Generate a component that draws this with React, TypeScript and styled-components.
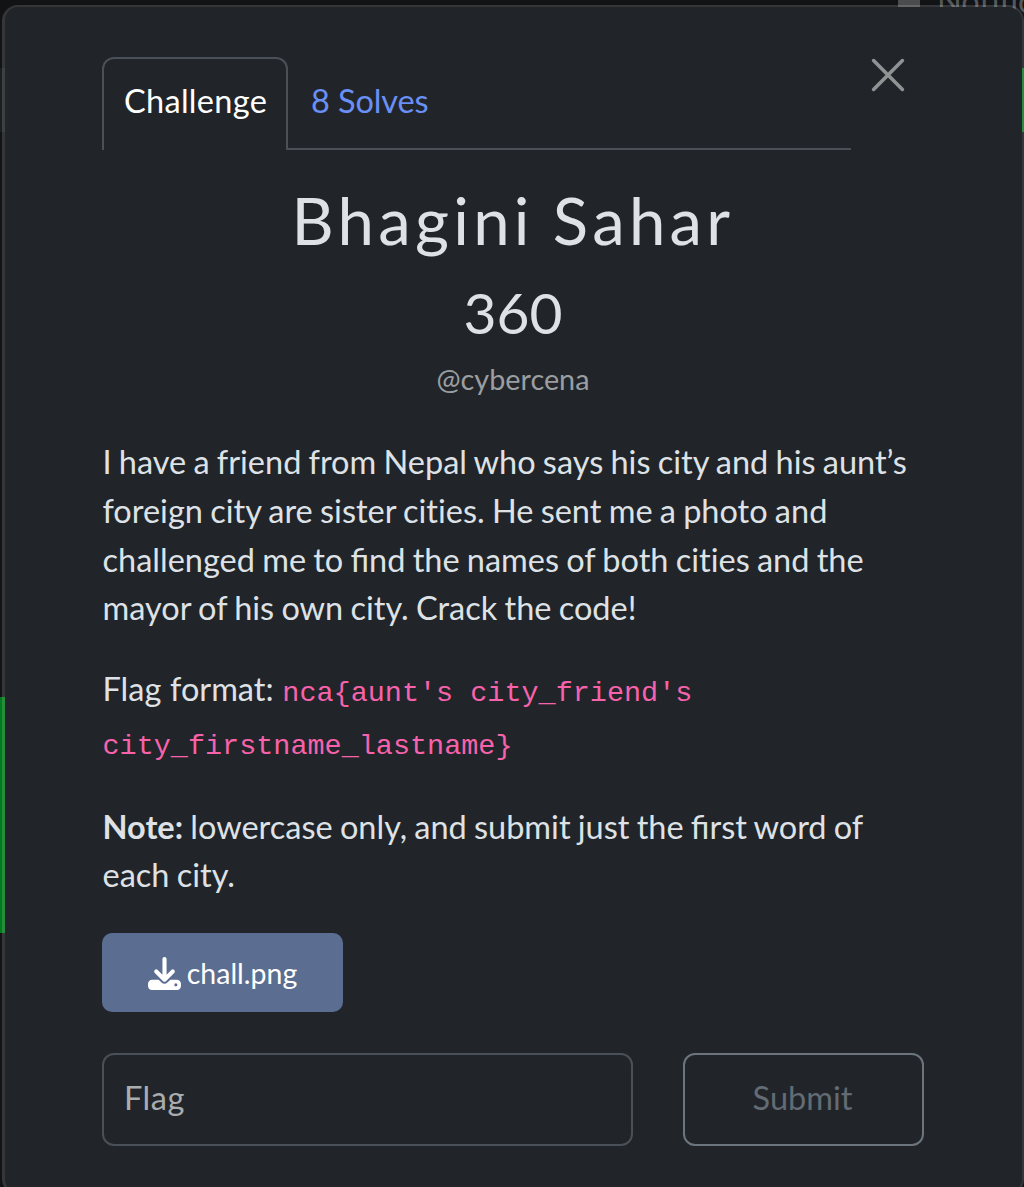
import React from "react";
import styled, { createGlobalStyle } from "styled-components";
import { FaDownload } from "react-icons/fa6";

const GlobalStyle = createGlobalStyle`
  *, *::before, *::after { box-sizing: border-box; }
  body {
    margin: 0;
    background: #111315;
    color: #dee2e6;
    font-family: Lato, "Noto Sans", sans-serif;
    font-size: 32.5px;
    line-height: 1.5;
  }
`;

const Page = styled.div`
  position: relative;
  width: 1024px;
  height: 1187px;
  overflow: hidden;
  padding: 5px 0 0 2px;
`;

const Tile = styled.div<{ $x: number; $y: number; $w: number; $h: number; $color: string }>`
  position: absolute;
  left: ${(p) => p.$x}px;
  top: ${(p) => p.$y}px;
  width: ${(p) => p.$w}px;
  height: ${(p) => p.$h}px;
  background: ${(p) => p.$color};
`;

const NavLabel = styled.div`
  position: absolute;
  left: 937px;
  top: -19px;
  color: #55585b;
  font-size: 32.5px;
  line-height: 40px;
  white-space: nowrap;
`;

const Modal = styled.section`
  position: relative;
  display: flex;
  flex-direction: column;
  width: 1022px;
  height: 1190px;
  padding: 50px 98px 0 97px;
  background: #212529;
  background-clip: padding-box;
  border: 2px solid rgba(255, 255, 255, 0.15);
  border-left-width: 3px;
  border-radius: 16px;
`;

const Header = styled.header`
  display: flex;
  justify-content: space-between;
  height: 93px;
`;

const Tabs = styled.nav`
  display: flex;
  width: 749px;
  height: 93px;
  border-bottom: 2px solid #495057;
`;

const Tab = styled.button<{ $active?: boolean }>`
  height: 93px;
  padding: 0 ${(p) => (p.$active ? 19 : 21)}px 6px;
  font: inherit;
  letter-spacing: ${(p) => (p.$active ? 0.3 : -0.1)}px;
  text-indent: ${(p) => (p.$active ? 1 : 0)}px;
  white-space: nowrap;
  background: ${(p) => (p.$active ? "#212529" : "transparent")};
  color: ${(p) => (p.$active ? "#fff" : "#6a8ff5")};
  border: 2px solid ${(p) => (p.$active ? "#495057" : "transparent")};
  border-bottom: 0;
  border-radius: 12px 12px 0 0;
  width: ${(p) => (p.$active ? "186px" : "auto")};
`;

const Close = styled.button`
  width: 34px;
  height: 34px;
  margin: 1px 19px 0 0;
  padding: 0;
  border: 0;
  background: none;
  color: #909294;
  svg { display: block; }
`;

const Title = styled.h2`
  margin: 31px 0 0;
  font-size: 65.3px;
  font-weight: 400;
  line-height: 78px;
  letter-spacing: 4.3px;
  word-spacing: -2px;
  text-align: center;
`;

const Points = styled.h3`
  margin: 19px 0 0;
  font-size: 56.9px;
  font-weight: 400;
  line-height: 68px;
  text-align: center;
`;

const Author = styled.small`
  display: block;
  margin-top: 12px;
  font-size: 28.8px;
  line-height: 42px;
  color: #9a9ea1;
  text-align: center;
`;

const Description = styled.div`
  margin: 38px 0 1px;
  padding-left: 0.5px;
  word-spacing: -1.1px;
`;

const Text = styled.p`
  margin: 0 0 32px;
  line-height: 48.75px;
`;

const FormatText = styled(Text)`
  word-spacing: 0.4px;
`;

const Plain = styled.span`
  font-variant-ligatures: none;
`;

const Code = styled.code`
  font-family: "Liberation Mono", monospace;
  font-size: 28.48px;
  line-height: 46.75px;
  word-spacing: 0;
  color: #f762ab;
`;

const Download = styled.a`
  display: flex;
  align-items: center;
  justify-content: center;
  gap: 6px;
  width: 241px;
  height: 79px;
  padding-top: 1px;
  flex-shrink: 0;
  border-radius: 10px;
  background: #5b6e91;
  color: #fff;
  font-size: 28.5px;
  line-height: 42px;
`;

const Form = styled.form`
  display: flex;
  gap: 50px;
  margin-top: 41px;
`;

const FlagInput = styled.input`
  width: 531px;
  height: 93px;
  padding: 0 20px 4px;
  background: #212529;
  border: 2px solid #495057;
  border-radius: 12px;
  color: #dee2e6;
  font: inherit;
  letter-spacing: 0.5px;
  &::placeholder { color: #a9adb0; opacity: 1; }
`;

const Submit = styled.button`
  width: 241px;
  height: 93px;
  padding: 0 2px 3px 0;
  background: transparent;
  border: 2px solid #6c757d;
  border-radius: 12px;
  color: #636b74;
  font: inherit;
`;

export default function App() {
  return (
    <Page>
      <GlobalStyle />
      <Tile $x={0} $y={68} $w={5} $h={64} $color="#1b1f22" />
      <Tile $x={0} $y={697} $w={5} $h={236} $color="#007a1e" />
      <Tile $x={1020} $y={68} $w={4} $h={64} $color="#007a1e" />
      <Tile $x={898} $y={0} $w={22} $h={7} $color="#4a4c4e" />
      <NavLabel>Notifications</NavLabel>
      <Modal>
        <Header>
          <Tabs>
            <Tab $active>Challenge</Tab>
            <Tab>8 Solves</Tab>
          </Tabs>
          <Close aria-label="Close">
            <svg width="34" height="34" viewBox="0 0 34 34" fill="none" stroke="currentColor" strokeWidth="3.6" strokeLinecap="round">
              <path d="M2.600 2.600 31.400 31.400M31.400 2.600 2.600 31.400" />
            </svg>
          </Close>
        </Header>
        <Title>Bhagini Sahar</Title>
        <Points>360</Points>
        <Author>@cybercena</Author>
        <Description>
          <Text>
            I have a friend from Nepal who says his city and his aunt’s foreign city are sister <Plain>cities</Plain>. He
            sent me a photo and challenged me to find the names of both <Plain>cities</Plain> and the mayor of his own
            city. Crack the code!
          </Text>
          <FormatText>
            Flag format: <Code>nca{"{"}aunt's city_friend's city_firstname_lastname{"}"}</Code>
          </FormatText>
          <Text>
            <b>Note:</b> lowercase only, and submit just the first word of each city.
          </Text>
        </Description>
        <Download>
          <FaDownload size={33} />
          chall.png
        </Download>
        <Form>
          <FlagInput placeholder="Flag" />
          <Submit type="button">Submit</Submit>
        </Form>
      </Modal>
    </Page>
  );
}
